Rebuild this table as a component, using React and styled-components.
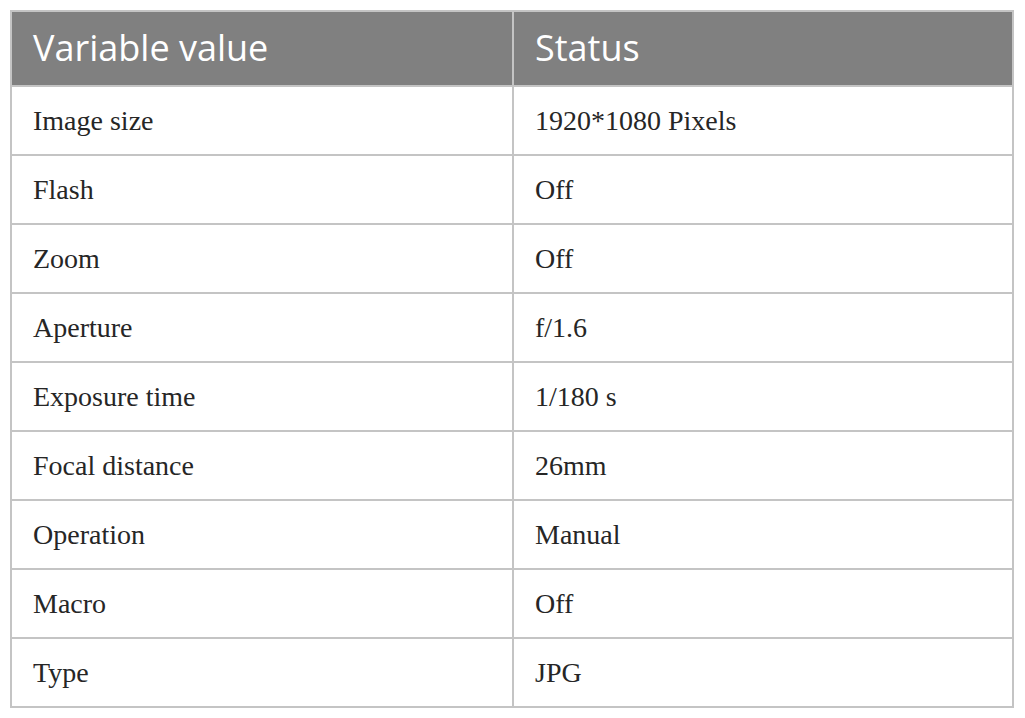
import React from 'react';
import styled, { createGlobalStyle } from 'styled-components';

const GlobalStyle = createGlobalStyle`
  html, body {
    margin: 0;
    padding: 0;
    background: #ffffff;
  }
`;

const Page = styled.div`
  padding: 10px 11px 10px 10px;
`;

const Table = styled.table`
  width: 1004px;
  border-collapse: collapse;
  table-layout: fixed;
  border: 2px solid #c4c4c4;
`;

const HeadCell = styled.th`
  box-sizing: border-box;
  height: 75px;
  padding: 0 0 3px 21px;
  background: #808080;
  color: #ffffff;
  font-family: "Open Sans", sans-serif;
  font-weight: 400;
  font-size: 36px;
  text-align: left;
  border: 2px solid #c4c4c4;
  border-top: none;
  width: ${(p) => p.$width || 'auto'};
`;

const Cell = styled.td`
  height: 67px;
  padding: 0 0 0 21px;
  font-family: "Liberation Serif", serif;
  font-size: 28px;
  color: #262626;
  border: 2px solid #c4c4c4;
`;

const rows = [
  ['Image size', '1920*1080 Pixels'],
  ['Flash', 'Off'],
  ['Zoom', 'Off'],
  ['Aperture', 'f/1.6'],
  ['Exposure time', '1/180 s'],
  ['Focal distance', '26mm'],
  ['Operation', 'Manual'],
  ['Macro', 'Off'],
  ['Type', 'JPG'],
];

export default function App() {
  return (
    <Page>
      <GlobalStyle />
      <Table>
        <thead>
          <tr>
            <HeadCell $width="502px">Variable value</HeadCell>
            <HeadCell>Status</HeadCell>
          </tr>
        </thead>
        <tbody>
          {rows.map(([name, value]) => (
            <tr key={name}>
              <Cell>{name}</Cell>
              <Cell>{value}</Cell>
            </tr>
          ))}
        </tbody>
      </Table>
    </Page>
  );
}
